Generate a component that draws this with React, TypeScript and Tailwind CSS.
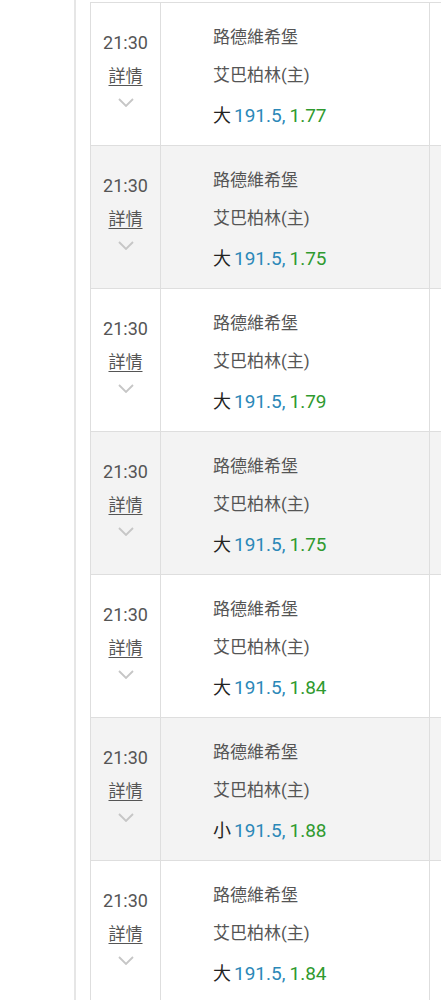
const rows = [
  { side: '大', odds: '1.77' },
  { side: '大', odds: '1.75' },
  { side: '大', odds: '1.79' },
  { side: '大', odds: '1.75' },
  { side: '大', odds: '1.84' },
  { side: '小', odds: '1.88' },
  { side: '大', odds: '1.84' },
]

function Chevron() {
  return (
    <svg width="16" height="9" viewBox="0 0 16 9" fill="none">
      <polyline points="1,1 8,8 15,1" stroke="#c6c6c6" strokeWidth="1.8" />
    </svg>
  )
}

export default function App() {
  return (
    <div className="flex h-[1000px] w-[441px] overflow-hidden bg-white" style={{ fontFamily: 'Roboto, "Noto Sans CJK TC", sans-serif' }}>
      <div className="w-[76px] shrink-0 border-r-2 border-[#e6e6e6]" />
      <div className="ml-[14px] flex-1 pt-[2px]">
        <div className="border-t border-l border-[#dedede]">
          {rows.map((r, i) => (
            <div
              key={i}
              className={`grid h-[143px] grid-cols-[70px_269px_1fr] border-b border-[#dedede] ${i % 2 ? 'bg-[#f3f3f3]' : 'bg-white'}`}
            >
              <div className="flex flex-col items-center border-r border-[#dedede] pt-[28px] text-[#555]">
                <div className="h-[24px] text-[18px] leading-[24px]">21:30</div>
                <div className="mt-[9px] h-[24px] text-[17px] leading-[24px] underline underline-offset-[3px]">詳情</div>
                <div className="mt-[10px] flex"><Chevron /></div>
              </div>
              <div className="flex flex-col border-r border-[#dedede] pl-[52px] pt-[15px] text-[17px] leading-[38px]">
                <div className="text-[#555]">路德維希堡</div>
                <div className="text-[#555]">艾巴柏林(主)</div>
                <div className="mt-[3px] text-[19px]">
                  <span className="text-[18px] text-[#222]">{r.side}</span>
                  <span className="ml-[3px] text-[#2b88b8]">191.5,</span>
                  <span className="ml-[4px] text-[#2f9a2f]">{r.odds}</span>
                </div>
              </div>
              <div />
            </div>
          ))}
        </div>
      </div>
    </div>
  )
}
